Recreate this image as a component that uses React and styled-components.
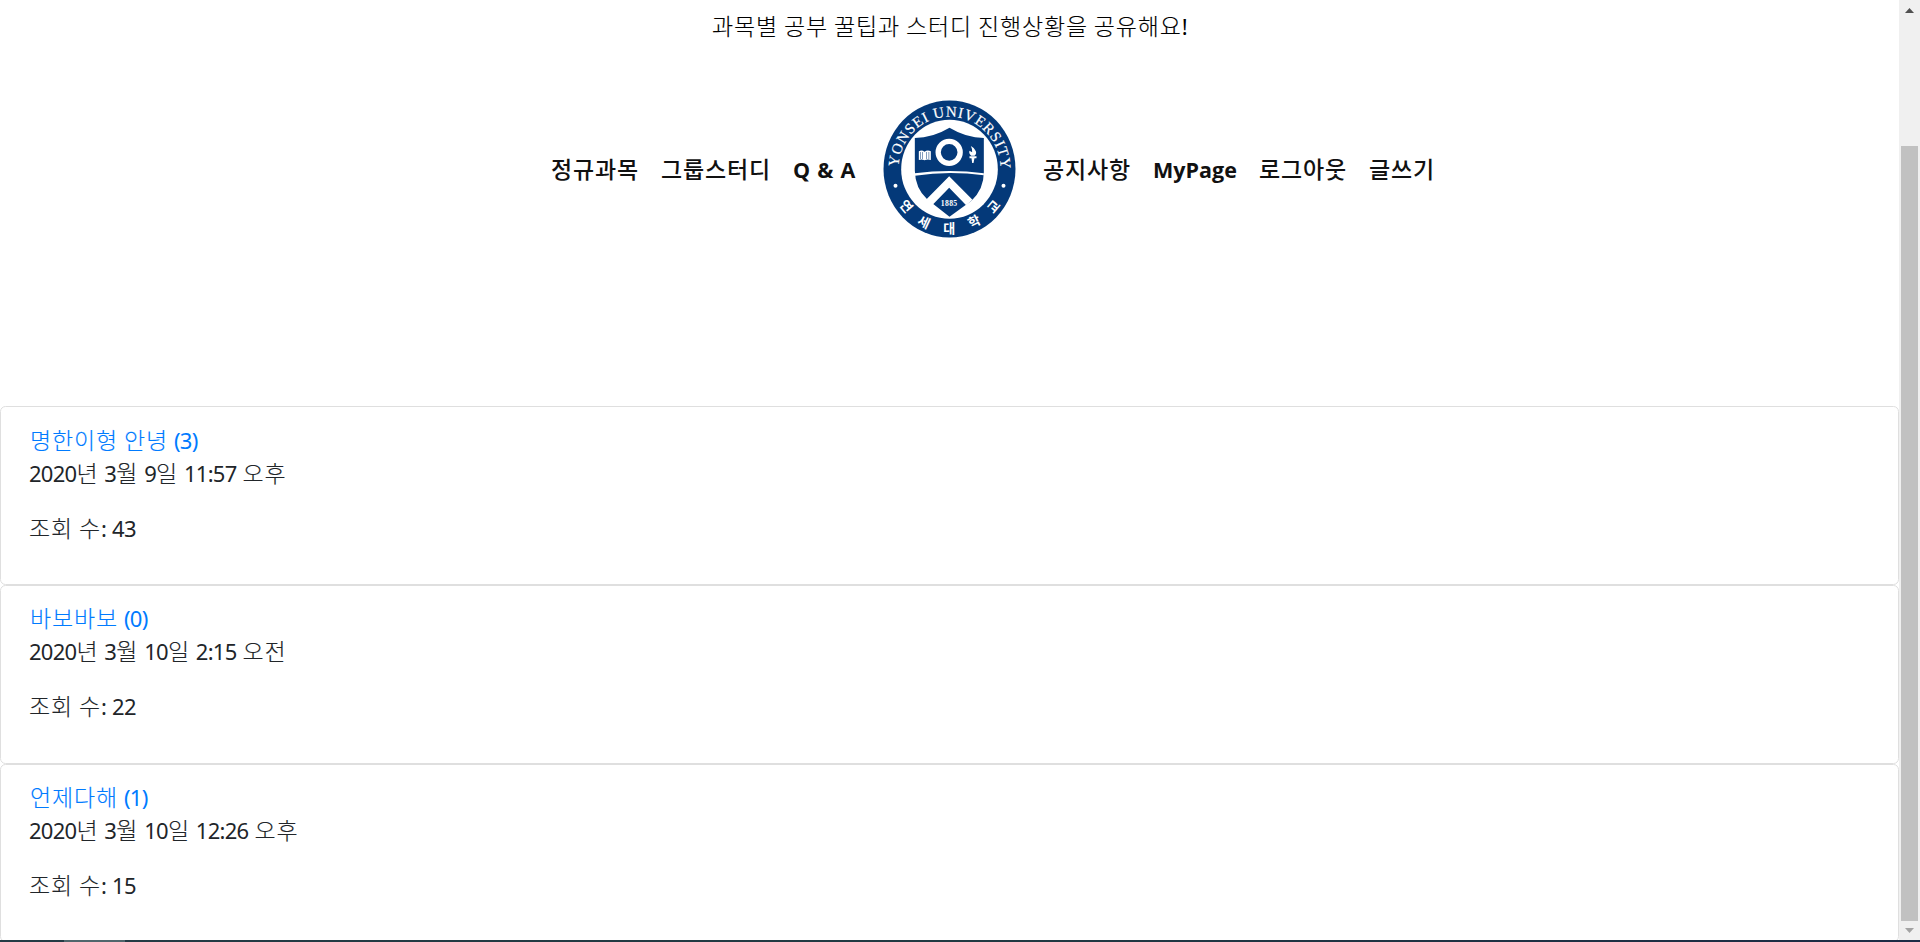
import React from "react";
import styled, { createGlobalStyle } from "styled-components";

const GlobalStyle = createGlobalStyle`
  * { box-sizing: border-box; }
  html, body { margin: 0; padding: 0; overflow: hidden; background: #fff; }
  body {
    color: #212529;
    font-family: "Noto Sans", "Noto Sans CJK KR", sans-serif;
    font-size: 22px;
    font-weight: 400;
    letter-spacing: -0.74px;
    line-height: 33px;
  }
`;

const Screen = styled.div`
  display: flex;
  flex-direction: column;
  height: 942px;
  overflow: hidden;
`;

const Viewport = styled.div`
  display: flex;
  height: 940px;
  overflow: hidden;
`;

const Page = styled.main`
  flex: 1;
  min-width: 0;
`;

const Hangul = styled.span`
  font-family: "Noto Sans CJK KR", sans-serif;
  font-size: 23px;
  font-weight: ${(p) => p.$weight || 300};
  letter-spacing: 0.84px;
  line-height: 1;
  -webkit-text-stroke: ${(p) => (p.$weight ? 0 : 0.12)}px currentColor;
`;

const Line = styled.p`
  margin: 0 0 ${(p) => p.$gap || 0}px;
  height: 33px;
  white-space: nowrap;
  word-spacing: 1px;
`;

const Intro = styled(Line)`
  padding-top: 10px;
  height: 43px;
  color: #000;
  text-align: center;
`;

const Nav = styled.nav`
  display: flex;
  justify-content: center;
  align-items: center;
  height: 138px;
  margin: 57px 0 168px;
  padding-left: 109px;
`;

const NavLink = styled.a`
  width: ${(p) => p.$width}px;
  margin-right: 22px;
  color: #111;
  font-family: "Open Sans", "Noto Sans CJK KR", sans-serif;
  font-size: 21.5px;
  font-weight: 700;
  letter-spacing: 0;
  word-spacing: 1.5px;
  white-space: nowrap;
  text-decoration: none;
`;

const Crest = styled.svg`
  flex: none;
  width: 133px;
  height: 138px;
  margin: 0 27px 0 4px;
  letter-spacing: 0;
`;

const Card = styled.article`
  height: 178.75px;
  padding: 16.5px 28px;
  border: 1.375px solid #dfdfdf;
  border-radius: 5.5px;
`;

const TitleLink = styled.a`
  margin-left: 1px;
  color: #007bff;
  text-decoration: none;
`;

const ScrollTrack = styled.div`
  display: flex;
  flex-direction: column;
  align-items: center;
  width: 21px;
  height: 940px;
  padding: 8px 0 7px;
  background: #f0f0f0;
`;

const ScrollThumb = styled.div`
  flex: none;
  width: 17px;
  height: 775px;
  margin: 133px 0 7px;
  background: #c1c1c1;
`;

const Arrow = styled.svg`
  display: block;
  flex: none;
  width: 9px;
  height: 5px;
`;

const Taskbar = styled.footer`
  height: 2px;
  padding-left: 64px;
  background: linear-gradient(90deg, #243b45, #203a42 50%, #1c2b45);
`;

const ActiveTask = styled.div`
  width: 61px;
  height: 2px;
  background: #50666c;
`;

function Mixed({ text, weight }) {
  return text
    .split(/([가-힣]+)/)
    .filter(Boolean)
    .map((run, i) =>
      /[가-힣]/.test(run) ? (
        <Hangul key={i} $weight={weight}>{run}</Hangul>
      ) : (
        <React.Fragment key={i}>{run}</React.Fragment>
      )
    );
}

const crestLetters = [
  ["연", 110, 347, 50],
  ["세", 163, 395, 25],
  ["대", 239, 412, 0],
  ["학", 314, 393, -27],
  ["교", 373, 348, -50],
];

function University() {
  return (
    <Crest viewBox="40.5 28 399 414">
      <defs>
        <path id="crest-arc" d="M87.700 250 A153 157 0 1 1 392.300 250" />
      </defs>
      <ellipse cx="240" cy="235" rx="198" ry="205.5" fill="#043979" />
      <ellipse cx="240" cy="235.5" rx="145" ry="148.500" fill="#fff" />
      <text fill="#fff" fontFamily="Liberation Serif, serif" fontSize="45" fontWeight="400" stroke="#fff" strokeWidth="0.5">
        <textPath href="#crest-arc" startOffset="21" textLength="481" lengthAdjust="spacing">
          YONSEI UNIVERSITY
        </textPath>
      </text>
      <circle cx="78" cy="285" r="6" fill="#fff" />
      <circle cx="402" cy="285" r="6" fill="#fff" />
      {crestLetters.map(([c, x, y, r]) => (
        <text
          key={c}
          transform={`translate(${x} ${y}) rotate(${r})`}
          y="14"
          textAnchor="middle"
          fontFamily="Noto Sans CJK KR, sans-serif"
          fontWeight="700"
          fontSize="39"
          fill="#fff"
        >
          {c}
        </text>
      ))}
      <path
        d="M240 111 Q290 141 343 142 V245 Q343 296 306 330 L240 378 L173 326 Q137 292 136 240 V142 Q190 141 240 111Z"
        fill="#043979"
      />
      <path d="M136 248 Q240 234 343 248 V254 Q240 240 136 255Z" fill="#fff" />
      <circle cx="239" cy="185" r="33" fill="none" stroke="#fff" strokeWidth="16" />
      <path d="M171 326 L239 257 L309 327 L290 344 L239 291 L188 344Z" fill="#fff" />
      <path d="M148 182 Q157 177 165 183 Q174 177 184 182 V208 Q174 205 165 209 Q157 205 148 208Z" fill="#fff" />
      <path d="M153 184V205 M159 184V205 M171 184V205 M178 184V205" stroke="#043979" strokeWidth="1.5" />
      <path d="M304 166 Q315 171 319 182 Q322 190 315 195 H305 Q297 187 300 180 L308 185 Q309 175 304 166Z M300 197H321V203H300Z M306 203H315L312 217H308Z" fill="#fff" />
      <text x="239" y="346" textAnchor="middle" fontFamily="Liberation Serif, serif" fontWeight="700" fontSize="23" letterSpacing="1" fill="#fff">
        1885
      </text>
    </Crest>
  );
}

const leftLinks = [["정규과목", 88], ["그룹스터디", 110], ["Q & A", 64]];
const rightLinks = [["공지사항", 88], ["MyPage", 84], ["로그아웃", 88], ["글쓰기", 66]];

const posts = [
  { title: "명한이형 안녕 (3)", date: "2020년 3월 9일 11:57 오후", views: 43 },
  { title: "바보바보 (0)", date: "2020년 3월 10일 2:15 오전", views: 22 },
  { title: "언제다해 (1)", date: "2020년 3월 10일 12:26 오후", views: 15 },
];

function NavLinks({ links }) {
  return links.map(([label, width]) => (
    <NavLink key={label} $width={width}>
      <Mixed text={label} weight={500} />
    </NavLink>
  ));
}

export default function App() {
  return (
    <Screen>
      <GlobalStyle />
      <Viewport>
        <Page>
          <Intro><Mixed text="과목별 공부 꿀팁과 스터디 진행상황을 공유해요!" /></Intro>
          <Nav>
            <NavLinks links={leftLinks} />
            <University />
            <NavLinks links={rightLinks} />
          </Nav>
          {posts.map((post) => (
            <Card key={post.title}>
              <Line><TitleLink><Mixed text={post.title} /></TitleLink></Line>
              <Line $gap={22}><Mixed text={post.date} /></Line>
              <Line><Mixed text={`조회 수: ${post.views}`} /></Line>
            </Card>
          ))}
        </Page>
        <ScrollTrack>
          <Arrow viewBox="0 0 9 5"><path d="M0 5 L4.500 0 L9 5Z" fill="#505050" /></Arrow>
          <ScrollThumb />
          <Arrow viewBox="0 0 9 5"><path d="M0 0 L4.500 5 L9 0Z" fill="#a3a3a3" /></Arrow>
        </ScrollTrack>
      </Viewport>
      <Taskbar><ActiveTask /></Taskbar>
    </Screen>
  );
}
